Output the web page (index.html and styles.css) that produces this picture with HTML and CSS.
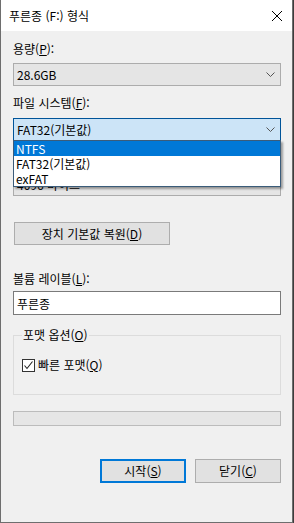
FILE: index.html
```html
<!DOCTYPE html>
<html lang="ko">
<head>
    <meta charset="UTF-8">
    <meta name="viewport" content="width=device-width, initial-scale=1.0">
    <title>푸른종 (F:) 형식</title>
    <link rel="stylesheet" href="styles.css">
</head>
<body>
    <div class="window">
        <div class="title-bar">
            <span class="title">푸른종 (F:) 형식</span>
            <svg class="close" width="12" height="12" viewBox="0 0 12 12">
                <path d="M1 1 L11 11 M11 1 L1 11" stroke="#000" stroke-width="1" fill="none"/>
            </svg>
        </div>

        <div class="content">
            <div class="label label-first">용량(<u>P</u>):</div>
            <div class="combo">
                <span>28.6GB</span>
                <svg class="chevron" width="9" height="5" viewBox="0 0 9 5"><path d="M0.5 0.5 L4.5 4.5 L8.5 0.5" stroke="#555" fill="none"/></svg>
            </div>

            <div class="label">파일 시스템(<u>F</u>):</div>
            <div class="combo-wrap">
                <div class="combo combo-open">
                    <span>FAT32(기본값)</span>
                    <svg class="chevron" width="9" height="5" viewBox="0 0 9 5"><path d="M0.5 0.5 L4.5 4.5 L8.5 0.5" stroke="#555" fill="none"/></svg>
                </div>
                <!-- opened list lies over the next rows -->
                <ul class="dropdown">
                    <li class="selected">NTFS</li>
                    <li>FAT32(기본값)</li>
                    <li>exFAT</li>
                </ul>
            </div>

            <!-- covered by the open list -->
            <div class="label label-hidden">할당 단위 크기(<u>A</u>):</div>
            <div class="combo">
                <span>4096 바이트</span>
                <svg class="chevron" width="9" height="5" viewBox="0 0 9 5"><path d="M0.5 0.5 L4.5 4.5 L8.5 0.5" stroke="#555" fill="none"/></svg>
            </div>

            <button class="btn btn-restore">장치 기본값 복원(<u>D</u>)</button>

            <div class="label label-volume">볼륨 레이블(<u>L</u>):</div>
            <input class="textbox" type="text" value="푸른종">

            <fieldset class="group">
                <legend>포맷 옵션(<u>O</u>)</legend>
                <label class="check">
                    <span class="check-box">
                        <svg width="11" height="11" viewBox="0 0 11 11"><path d="M1.5 5.5 L4 8.5 L9.5 1.5" stroke="#222" stroke-width="1.1" fill="none"/></svg>
                    </span>
                    <span>빠른 포맷(<u>Q</u>)</span>
                </label>
            </fieldset>

            <div class="progress"></div>

            <div class="button-row">
                <button class="btn btn-default">시작(<u>S</u>)</button>
                <button class="btn">닫기(<u>C</u>)</button>
            </div>
        </div>
    </div>
</body>
</html>
```

FILE: styles.css
```css
body {
    margin: 0;
    background-color: #3c3c3c;
    font-family: "Noto Sans CJK KR", "Noto Sans", sans-serif;
    font-size: 12px;
    color: #000;
}
.window {
    width: 291px;
    height: 522px;
    background-color: #f0f0f0;
    border-left: 1px solid #6e6e6e;
    border-right: 1px solid #6e6e6e;
    border-bottom: 1px solid #6e6e6e;
    display: flex;
    flex-direction: column;
}
.title-bar {
    height: 31px;
    background-color: #fff;
    display: flex;
    align-items: center;
    justify-content: space-between;
    padding: 0 8px 0 8px;
}
.title {
    font-size: 12px;
    line-height: 16px;
}
.close {
    margin-right: 1px;
}
.content {
    display: flex;
    flex-direction: column;
    padding: 0 11px 0 12px;
}
.label {
    line-height: 16px;
    height: 16px;
    margin-top: 9px;
    margin-bottom: 7px;
}
.label-first {
    margin-top: 10px;
    margin-bottom: 6px;
}
.label-hidden {
    visibility: hidden;
}
.combo {
    height: 21px;
    border: 1px solid #acacac;
    background-color: #e5e5e5;
    display: flex;
    align-items: center;
    justify-content: space-between;
    padding: 0 5px 0 3px;
    line-height: 16px;
}
.chevron {
    display: block;
}
.combo-open {
    background-color: #cce4f7;
    border-color: #005499;
}
.combo-wrap {
    position: relative;
}
.dropdown {
    position: absolute;
    left: 0;
    right: 0;
    top: 22px;
    margin: 0;
    padding: 0;
    list-style: none;
    background-color: #fff;
    border: 1px solid #3b5c7a;
    box-shadow: 2px 2px 2px rgba(0, 0, 0, 0.35);
    z-index: 2;
}
.dropdown li {
    height: 15px;
    line-height: 15px;
    padding-left: 2px;
}
.dropdown .selected {
    background-color: #0078d7;
    color: #fff;
}
.btn {
    font-family: inherit;
    font-size: 12px;
    line-height: 16px;
    height: 23px;
    padding: 0;
    background-color: #e1e1e1;
    border: 1px solid #adadad;
    color: #000;
}
.btn-restore {
    width: 156px;
    margin: 26px 0 0 1px;
    align-self: flex-start;
}
.label-volume {
    margin-top: 26px;
    margin-bottom: 4px;
}
.textbox {
    height: 24px;
    box-sizing: border-box;
    border: 1px solid #7a7a7a;
    background-color: #fff;
    font-family: inherit;
    font-size: 12px;
    padding: 0 3px;
    margin: 0;
}
.group {
    margin: 12px 0 0 0;
    padding: 14px 8px 0 8px;
    height: 52px;
    border: 1px solid #dcdcdc;
    min-width: 0;
}
.group legend {
    padding: 0 1px;
    margin-left: 0;
    line-height: 16px;
}
.check {
    display: flex;
    align-items: center;
    gap: 3px;
    line-height: 16px;
}
.check-box {
    width: 11px;
    height: 11px;
    border: 1px solid #333;
    background-color: #fff;
    display: flex;
}
.progress {
    height: 13px;
    margin-top: 16px;
    border: 1px solid #bcbcbc;
    background-color: #e6e6e6;
}
.button-row {
    display: flex;
    justify-content: flex-end;
    gap: 9px;
    margin-top: 33px;
}
.button-row .btn {
    width: 86px;
    height: 24px;
}
.btn-default {
    border: 2px solid #0078d7;
}
```
